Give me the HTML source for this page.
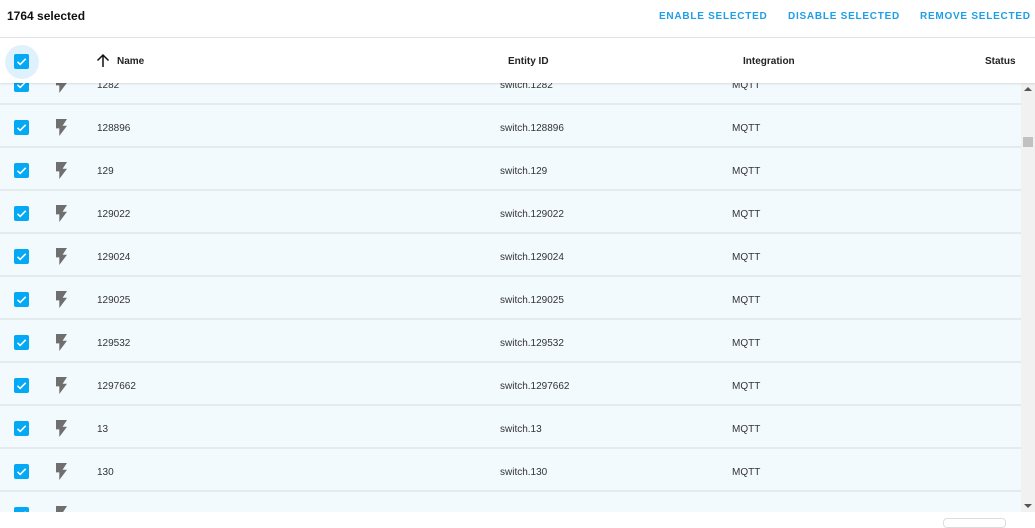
<!DOCTYPE html>
<html><head><meta charset="utf-8"><style>
*{margin:0;padding:0;box-sizing:border-box}
body{width:1035px;height:525px;overflow:hidden;background:#fff;font-family:"Liberation Sans",Roboto,sans-serif;position:relative;color:#212121}
.top{position:absolute;left:0;top:0;width:1035px;height:38px;border-bottom:1px solid #e3e3e3}
.sel{position:absolute;left:7px;top:9px;font-size:12px;font-weight:bold;color:#111}
.btn{position:absolute;top:11px;font-size:10px;font-weight:bold;letter-spacing:0.75px;color:#1e9ee6;white-space:nowrap}
.rows{position:absolute;left:0;top:62px;width:1021px;height:450px;overflow:hidden}
.row{height:43px;background:#f3fafe;border-bottom:2px solid #e4ebee;position:relative;font-size:10px;color:#333}
.cb{position:absolute;left:14px;top:15px;width:15px;height:15px;background:#03a9f4;border-radius:2px}
.cb svg,.hcb svg{position:absolute;left:1px;top:1px}
.ic{position:absolute;left:56px;top:14px}
.t{position:absolute;top:18px}
.hdr{position:absolute;left:0;top:38px;width:1035px;height:45px;background:#fff;box-shadow:0 1px 2px rgba(0,0,0,.12);font-size:10px;font-weight:bold;color:#222}
.hcircle{position:absolute;left:5px;top:7px;width:34px;height:34px;border-radius:50%;background:#dff1fc}
.hcb{position:absolute;left:14px;top:16px;width:15px;height:15px;background:#03a9f4;border-radius:2px}
.h{position:absolute;top:18px}
.sb{position:absolute;left:1021px;top:83px;width:14px;height:429px;background:#f1f1f1}
</style></head><body>
<div class="rows">
<div class="row"><div class="cb"><svg width="13" height="13" viewBox="0 0 13 13"><path d="M2.5 6.8l2.7 2.6 5.5-5.6" stroke="#fff" stroke-width="1.6" fill="none"/></svg></div><svg class="ic" width="11" height="17" viewBox="7 2 10 20" preserveAspectRatio="none"><path d="M7 2V13H10V22L17 10H13L17 2Z" fill="#6f6f6f"/></svg><span class="t" style="left:97px">1282</span><span class="t" style="left:500px">switch.1282</span><span class="t" style="left:732px">MQTT</span></div>
<div class="row"><div class="cb"><svg width="13" height="13" viewBox="0 0 13 13"><path d="M2.5 6.8l2.7 2.6 5.5-5.6" stroke="#fff" stroke-width="1.6" fill="none"/></svg></div><svg class="ic" width="11" height="17" viewBox="7 2 10 20" preserveAspectRatio="none"><path d="M7 2V13H10V22L17 10H13L17 2Z" fill="#6f6f6f"/></svg><span class="t" style="left:97px">128896</span><span class="t" style="left:500px">switch.128896</span><span class="t" style="left:732px">MQTT</span></div>
<div class="row"><div class="cb"><svg width="13" height="13" viewBox="0 0 13 13"><path d="M2.5 6.8l2.7 2.6 5.5-5.6" stroke="#fff" stroke-width="1.6" fill="none"/></svg></div><svg class="ic" width="11" height="17" viewBox="7 2 10 20" preserveAspectRatio="none"><path d="M7 2V13H10V22L17 10H13L17 2Z" fill="#6f6f6f"/></svg><span class="t" style="left:97px">129</span><span class="t" style="left:500px">switch.129</span><span class="t" style="left:732px">MQTT</span></div>
<div class="row"><div class="cb"><svg width="13" height="13" viewBox="0 0 13 13"><path d="M2.5 6.8l2.7 2.6 5.5-5.6" stroke="#fff" stroke-width="1.6" fill="none"/></svg></div><svg class="ic" width="11" height="17" viewBox="7 2 10 20" preserveAspectRatio="none"><path d="M7 2V13H10V22L17 10H13L17 2Z" fill="#6f6f6f"/></svg><span class="t" style="left:97px">129022</span><span class="t" style="left:500px">switch.129022</span><span class="t" style="left:732px">MQTT</span></div>
<div class="row"><div class="cb"><svg width="13" height="13" viewBox="0 0 13 13"><path d="M2.5 6.8l2.7 2.6 5.5-5.6" stroke="#fff" stroke-width="1.6" fill="none"/></svg></div><svg class="ic" width="11" height="17" viewBox="7 2 10 20" preserveAspectRatio="none"><path d="M7 2V13H10V22L17 10H13L17 2Z" fill="#6f6f6f"/></svg><span class="t" style="left:97px">129024</span><span class="t" style="left:500px">switch.129024</span><span class="t" style="left:732px">MQTT</span></div>
<div class="row"><div class="cb"><svg width="13" height="13" viewBox="0 0 13 13"><path d="M2.5 6.8l2.7 2.6 5.5-5.6" stroke="#fff" stroke-width="1.6" fill="none"/></svg></div><svg class="ic" width="11" height="17" viewBox="7 2 10 20" preserveAspectRatio="none"><path d="M7 2V13H10V22L17 10H13L17 2Z" fill="#6f6f6f"/></svg><span class="t" style="left:97px">129025</span><span class="t" style="left:500px">switch.129025</span><span class="t" style="left:732px">MQTT</span></div>
<div class="row"><div class="cb"><svg width="13" height="13" viewBox="0 0 13 13"><path d="M2.5 6.8l2.7 2.6 5.5-5.6" stroke="#fff" stroke-width="1.6" fill="none"/></svg></div><svg class="ic" width="11" height="17" viewBox="7 2 10 20" preserveAspectRatio="none"><path d="M7 2V13H10V22L17 10H13L17 2Z" fill="#6f6f6f"/></svg><span class="t" style="left:97px">129532</span><span class="t" style="left:500px">switch.129532</span><span class="t" style="left:732px">MQTT</span></div>
<div class="row"><div class="cb"><svg width="13" height="13" viewBox="0 0 13 13"><path d="M2.5 6.8l2.7 2.6 5.5-5.6" stroke="#fff" stroke-width="1.6" fill="none"/></svg></div><svg class="ic" width="11" height="17" viewBox="7 2 10 20" preserveAspectRatio="none"><path d="M7 2V13H10V22L17 10H13L17 2Z" fill="#6f6f6f"/></svg><span class="t" style="left:97px">1297662</span><span class="t" style="left:500px">switch.1297662</span><span class="t" style="left:732px">MQTT</span></div>
<div class="row"><div class="cb"><svg width="13" height="13" viewBox="0 0 13 13"><path d="M2.5 6.8l2.7 2.6 5.5-5.6" stroke="#fff" stroke-width="1.6" fill="none"/></svg></div><svg class="ic" width="11" height="17" viewBox="7 2 10 20" preserveAspectRatio="none"><path d="M7 2V13H10V22L17 10H13L17 2Z" fill="#6f6f6f"/></svg><span class="t" style="left:97px">13</span><span class="t" style="left:500px">switch.13</span><span class="t" style="left:732px">MQTT</span></div>
<div class="row"><div class="cb"><svg width="13" height="13" viewBox="0 0 13 13"><path d="M2.5 6.8l2.7 2.6 5.5-5.6" stroke="#fff" stroke-width="1.6" fill="none"/></svg></div><svg class="ic" width="11" height="17" viewBox="7 2 10 20" preserveAspectRatio="none"><path d="M7 2V13H10V22L17 10H13L17 2Z" fill="#6f6f6f"/></svg><span class="t" style="left:97px">130</span><span class="t" style="left:500px">switch.130</span><span class="t" style="left:732px">MQTT</span></div>
<div class="row"><div class="cb"><svg width="13" height="13" viewBox="0 0 13 13"><path d="M2.5 6.8l2.7 2.6 5.5-5.6" stroke="#fff" stroke-width="1.6" fill="none"/></svg></div><svg class="ic" width="11" height="17" viewBox="7 2 10 20" preserveAspectRatio="none"><path d="M7 2V13H10V22L17 10H13L17 2Z" fill="#6f6f6f"/></svg></div>
</div>
<div class="sb"><div style="position:absolute;left:3px;top:4px;width:0;height:0;border-left:4px solid transparent;border-right:4px solid transparent;border-bottom:4px solid #555"></div><div style="position:absolute;left:2px;top:54px;width:10px;height:10px;background:#c1c1c1"></div><div style="position:absolute;left:3px;top:421px;width:0;height:0;border-left:4px solid transparent;border-right:4px solid transparent;border-top:4px solid #555"></div></div>
<div style="position:absolute;left:943px;top:518px;width:63px;height:10px;border:1px solid #ddd;border-radius:4px"></div>
<div class="top"><span class="sel">1764 selected</span>
<span class="btn" style="left:659px">ENABLE SELECTED</span>
<span class="btn" style="left:788px">DISABLE SELECTED</span>
<span class="btn" style="left:920px">REMOVE SELECTED</span></div>
<div class="hdr"><div class="hcircle"></div><div class="hcb"><svg width="13" height="13" viewBox="0 0 13 13"><path d="M2.5 6.8l2.7 2.6 5.5-5.6" stroke="#fff" stroke-width="1.6" fill="none"/></svg></div>
<svg style="position:absolute;left:96px;top:15px" width="14" height="15" viewBox="0 0 14 15"><path d="M7 14V2M1.5 7.5L7 2l5.5 5.5" stroke="#111" stroke-width="1.5" fill="none"/></svg>
<span class="h" style="left:117px">Name</span><span class="h" style="left:508px">Entity ID</span><span class="h" style="left:743px">Integration</span><span class="h" style="left:985px">Status</span></div>
</body></html>
